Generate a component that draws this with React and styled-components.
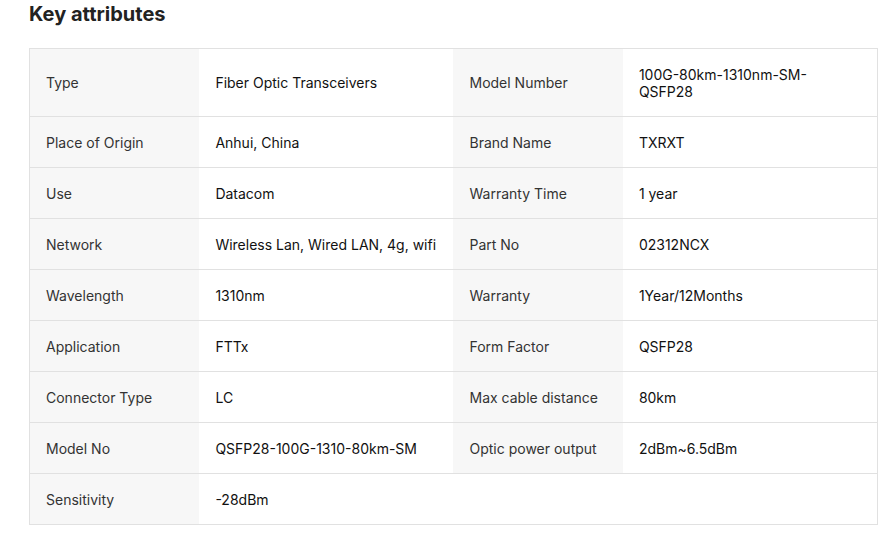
import React from "react";
import styled, { createGlobalStyle } from "styled-components";

const Global = createGlobalStyle`
  html, body { margin: 0; padding: 0; background: #fff; }
  body { font-family: Inter, "Noto Sans", Arial, sans-serif; color: #222; }
`;

const Section = styled.section`
  padding: 0 0 0 29px;
  width: 849px;
`;

const Title = styled.h2`
  margin: 0 0 20px;
  font-size: 20px;
  line-height: 28px;
  font-weight: 700;
  color: #222;
`;

const Table = styled.table`
  width: 849px;
  table-layout: fixed;
  border-collapse: separate;
  border-spacing: 0;
  border: 1px solid #e1e1e1;
`;

const Row = styled.tr`
  &:not(:last-child) > td {
    border-bottom: 1px solid #e1e1e1;
  }
`;

const Cell = styled.td`
  padding: 16.5px 16px;
  font-size: 14px;
  line-height: 17px;
  vertical-align: middle;
  word-break: break-word;
`;

const Label = styled(Cell)`
  background: #f7f7f7;
  color: #333;
  font-weight: 400;
`;

const Value = styled(Cell)`
  padding-right: 17px;
  background: #fff;
  color: #111;
  font-weight: 400;
`;

const Empty = styled(Cell)`
  background: #fff;
`;

const rows = [
  ["Type", "Fiber Optic Transceivers", "Model Number", "100G-80km-1310nm-SM-QSFP28"],
  ["Place of Origin", "Anhui, China", "Brand Name", "TXRXT"],
  ["Use", "Datacom", "Warranty Time", "1 year"],
  ["Network", "Wireless Lan, Wired LAN, 4g, wifi", "Part No", "02312NCX"],
  ["Wavelength", "1310nm", "Warranty", "1Year/12Months"],
  ["Application", "FTTx", "Form Factor", "QSFP28"],
  ["Connector Type", "LC", "Max cable distance", "80km"],
  ["Model No", "QSFP28-100G-1310-80km-SM", "Optic power output", "2dBm~6.5dBm"],
  ["Sensitivity", "-28dBm"],
];

export default function App() {
  return (
    <>
      <Global />
      <Section>
        <Title>Key attributes</Title>
        <Table>
          <colgroup>
            <col style={{ width: "20%" }} />
            <col style={{ width: "30%" }} />
            <col style={{ width: "20%" }} />
            <col style={{ width: "30%" }} />
          </colgroup>
          <tbody>
            {rows.map((r, i) => (
              <Row key={i}>
                <Label>{r[0]}</Label>
                <Value>{r[1]}</Value>
                {r[2] ? (
                  <>
                    <Label>{r[2]}</Label>
                    <Value>{r[3]}</Value>
                  </>
                ) : (
                  <Empty colSpan={2} />
                )}
              </Row>
            ))}
          </tbody>
        </Table>
      </Section>
    </>
  );
}
